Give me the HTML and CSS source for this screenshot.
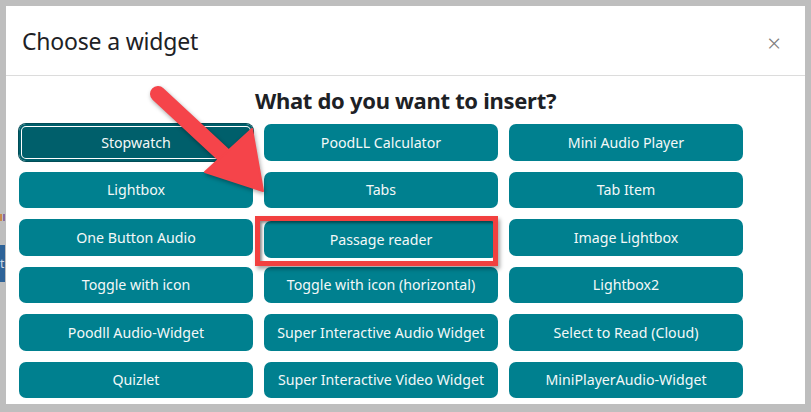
FILE: index.html
```html
<!DOCTYPE html>
<html>
<head>
<meta charset="utf-8">
<link rel="stylesheet" href="styles.css">
</head>
<body>
<div class="backdrop">
  <div class="side-mark mark-a"></div>
  <div class="side-mark mark-b">t</div>
  <div class="modal">
    <div class="modal-header">
      <h1 class="modal-title">Choose a widget</h1>
      <span class="close">×</span>
    </div>
    <div class="modal-body">
      <h2 class="question">What do you want to insert?</h2>
      <div class="grid">
        <button class="btn btn-active">Stopwatch</button>
        <button class="btn">PoodLL Calculator</button>
        <button class="btn">Mini Audio Player</button>
        <button class="btn">Lightbox</button>
        <button class="btn">Tabs</button>
        <button class="btn">Tab Item</button>
        <button class="btn">One Button Audio</button>
        <div class="highlight-wrap"><button class="btn">Passage reader</button><span class="highlight"></span></div>
        <button class="btn">Image Lightbox</button>
        <button class="btn">Toggle with icon</button>
        <button class="btn">Toggle with icon (horizontal)</button>
        <button class="btn">Lightbox2</button>
        <button class="btn">Poodll Audio-Widget</button>
        <button class="btn">Super Interactive Audio Widget</button>
        <button class="btn">Select to Read (Cloud)</button>
        <button class="btn">Quizlet</button>
        <button class="btn">Super Interactive Video Widget</button>
        <button class="btn">MiniPlayerAudio-Widget</button>
      </div>
    </div>
  </div>
  <svg class="arrow" width="811" height="412" viewBox="0 0 811 412">
    <line x1="158" y1="94" x2="228" y2="159" stroke="#f5444a" stroke-width="16" stroke-linecap="round"/>
    <polygon points="263,191 252,129 205,172" fill="#f5444a" stroke="#f5444a" stroke-width="2" stroke-linejoin="round"/>
  </svg>
</div>
</body>
</html>
```

FILE: styles.css
```css
* { box-sizing: border-box; }
html, body {
  margin: 0;
  padding: 0;
  width: 811px;
  height: 412px;
  overflow: hidden;
}
body {
  font-family: "Noto Sans", "Open Sans", sans-serif;
  background: #bdbdbd;
}
.backdrop {
  position: relative;
  width: 811px;
  height: 412px;
  padding: 6px 6px 0 6px;
  background: #bebebe;
}
.side-mark {
  position: absolute;
  left: 0;
  width: 5px;
}
.mark-a {
  top: 214px;
  height: 7px;
  border-left: 2px solid #c98a4a;
  border-right: 2px solid #8a6aa0;
}
.mark-b {
  top: 245px;
  height: 37px;
  background: #2e6398;
  color: #cfd8e6;
  font-size: 12px;
  line-height: 37px;
  overflow: hidden;
}
.modal {
  background: #fff;
  height: 398px;
  display: flex;
  flex-direction: column;
}
.modal-header {
  height: 70px;
  border-bottom: 1px solid #dcdcdc;
  display: flex;
  align-items: center;
  justify-content: space-between;
  padding: 0 24px 0 16px;
}
.modal-title {
  margin: 0;
  font-weight: 400;
  font-size: 23px;
  color: #1d2125;
  letter-spacing: -0.2px;
}
.close {
  color: #7d7d7d;
  font-size: 24px;
  font-weight: 300;
  margin-top: 3px;
}
.modal-body {
  padding: 9px 0 0 13px;
}
.question {
  margin: 0 0 0 -13px;
  text-align: center;
  font-size: 22px;
  font-weight: 700;
  color: #1d2125;
  line-height: 30px;
  letter-spacing: -0.3px;
}
.grid {
  margin-top: 9px;
  display: grid;
  grid-template-columns: repeat(3, 234px);
  grid-auto-rows: 36.5px;
  column-gap: 11px;
  row-gap: 11px;
}
.btn {
  font-family: inherit;
  font-size: 14.2px;
  color: #f4f8f8;
  background: #00808f;
  border: 0;
  border-radius: 7px;
  padding: 0;
  width: 100%;
  height: 100%;
}
.btn-active {
  background: #005f6b;
  box-shadow: inset 0 0 0 2px #005f6b, inset 0 0 0 3px #fff, 0 0 0 1px #004c56;
}
.highlight-wrap {
  position: relative;
  top: 2px;
}
.highlight {
  position: absolute;
  left: -9px;
  top: -5px;
  right: 0;
  bottom: -8px;
  border: 5px solid #f2403f;
  box-shadow: 2px 3px 4px rgba(0,0,0,0.35), inset 2px 2px 3px rgba(0,0,0,0.45);
}
.arrow {
  position: absolute;
  left: 0;
  top: 0;
  filter: drop-shadow(1px 2px 2px rgba(0,0,0,0.35));
}
```
